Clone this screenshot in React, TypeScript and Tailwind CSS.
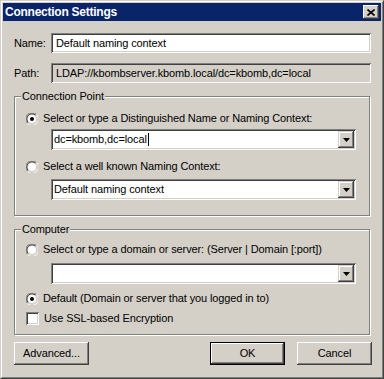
import React from 'react';

const sunken =
  'shadow-[inset_1px_1px_0_#808080,inset_-1px_-1px_0_#ffffff,inset_2px_2px_0_#404040,inset_-2px_-2px_0_#d4d0c8]';
const raised =
  'shadow-[inset_-1px_-1px_0_#404040,inset_1px_1px_0_#ffffff,inset_-2px_-2px_0_#808080,inset_2px_2px_0_#d4d0c8]';
const raisedCombo =
  'shadow-[inset_-1px_-1px_0_#404040,inset_1px_1px_0_#d4d0c8,inset_-2px_-2px_0_#808080,inset_2px_2px_0_#ffffff]';

function Radio({ checked }: { checked?: boolean }) {
  return (
    <svg width="12" height="12" viewBox="0 0 12 12" className="shrink-0">
      <path d="M1.5 10.5 A6 6 0 0 1 10.5 1.5" fill="none" stroke="#808080" strokeWidth="1" />
      <path d="M10.5 1.5 A6 6 0 0 1 1.5 10.5" fill="none" stroke="#ffffff" strokeWidth="1" />
      <path d="M2.3 9.7 A4.9 4.9 0 0 1 9.7 2.3" fill="none" stroke="#404040" strokeWidth="1" />
      <path d="M9.7 2.3 A4.9 4.9 0 0 1 2.3 9.7" fill="none" stroke="#d4d0c8" strokeWidth="1" />
      <circle cx="6" cy="6" r="4" fill="#ffffff" />
      {checked && <circle cx="6" cy="6" r="2" fill="#000000" />}
    </svg>
  );
}

function Combo({ value, caret }: { value?: string; caret?: boolean }) {
  return (
    <div className={`ml-[36px] w-[305px] h-[21px] bg-white ${sunken} flex items-center p-[2px]`}>
      <div className="flex-1 flex items-center pl-[1px] h-full">
        <span className="leading-[13px]">{value}</span>
        {caret && <span className="w-[1px] h-[13px] bg-black ml-[1px]" />}
      </div>
      <div className={`w-[16px] h-[17px] bg-[#d4d0c8] ${raisedCombo} flex items-center justify-center`}>
        <svg width="7" height="4" viewBox="0 0 7 4">
          <path d="M0 0H7L3.5 4Z" fill="#000" />
        </svg>
      </div>
    </div>
  );
}

function Button({ label, isDefault }: { label: string; isDefault?: boolean }) {
  return (
    <div
      className={`w-[75px] h-[23px] bg-[#d4d0c8] flex items-center justify-center ${
        isDefault
          ? 'shadow-[inset_0_0_0_1px_#000000,inset_-2px_-2px_0_#404040,inset_2px_2px_0_#ffffff,inset_-3px_-3px_0_#808080]'
          : raised
      }`}
    >
      {label}
    </div>
  );
}

function Group({ title, className, children }: { title: string; className: string; children: React.ReactNode }) {
  return (
    <div
      className={`w-[356px] border border-[#808080] shadow-[inset_1px_1px_0_#ffffff,1px_1px_0_#ffffff] flex flex-col ${className}`}
    >
      <span className="-mt-[7px] ml-[6px] px-[1px] bg-[#d4d0c8] w-fit leading-[13px]">{title}</span>
      {children}
    </div>
  );
}

export default function App() {
  return (
    <div className="w-[384px] h-[379px] bg-[#d4d0c8] text-[11px] tracking-[-0.12px] text-black font-['Liberation_Sans',Arial,sans-serif]">
      <div className="w-full h-full border border-t-[#d4d0c8] border-l-[#d4d0c8] border-r-[#404040] border-b-[#404040]">
        <div className="w-full h-full border border-t-white border-l-white border-r-[#808080] border-b-[#808080] p-[1px] flex flex-col">
          {/* title bar */}
          <div className="h-[18px] bg-[#0a246a] flex items-center justify-between pl-[2px] pr-[2px]">
            <span className="text-white font-bold text-[12px] leading-[14px] tracking-[-0.25px]">Connection Settings</span>
            <div className={`w-[16px] h-[14px] bg-[#d4d0c8] ${raised} flex items-center justify-center`}>
              <svg width="8" height="7" viewBox="0 0 8 7">
                <path d="M0.5 0.5L7.5 6.5M7.5 0.5L0.5 6.5" stroke="#000" strokeWidth="1.6" />
              </svg>
            </div>
          </div>

          <div className="flex flex-col pl-[11px] pr-[10px] pt-[12px]">
            <div className="flex items-center">
              <span className="w-[37px]">Name:</span>
              <div className={`flex-1 h-[20px] bg-white ${sunken} flex items-center pl-[5px]`}>
                Default naming context
              </div>
            </div>
            <div className="flex items-center mt-[10px]">
              <span className="w-[37px]">Path:</span>
              <div className={`flex-1 h-[20px] ${sunken} flex items-center pl-[5px]`}>
                LDAP://kbombserver.kbomb.local/dc=kbomb,dc=local
              </div>
            </div>

            <Group title="Connection Point" className="mt-[13px] h-[120px]">
              <div className="mt-[9px] h-[13px] flex items-center gap-[5px] pl-[11px]">
                <Radio checked />
                <span>Select or type a Distinguished Name or Naming Context:</span>
              </div>
              <div className="mt-[4px]">
                <Combo value="dc=kbomb,dc=local" caret />
              </div>
              <div className="mt-[10px] h-[13px] flex items-center gap-[5px] pl-[11px]">
                <Radio />
                <span>Select a well known Naming Context:</span>
              </div>
              <div className="mt-[6px]">
                <Combo value="Default naming context" />
              </div>
            </Group>

            <Group title="Computer" className="mt-[13px] h-[106px]">
              <div className="mt-[7px] h-[13px] flex items-center gap-[5px] pl-[11px]">
                <Radio />
                <span>Select or type a domain or server: (Server | Domain [:port])</span>
              </div>
              <div className="mt-[7px]">
                <Combo />
              </div>
              <div className="mt-[8px] h-[13px] flex items-center gap-[5px] pl-[11px]">
                <Radio checked />
                <span>Default (Domain or server that you logged in to)</span>
              </div>
              <div className="mt-[7px] h-[13px] flex items-center gap-[5px] pl-[11px]">
                <div className={`w-[13px] h-[13px] bg-white ${sunken} shrink-0`} />
                <span>Use SSL-based Encryption</span>
              </div>
            </Group>

            <div className="mt-[7px] flex items-center">
              <Button label="Advanced..." />
              <div className="flex-1" />
              <Button label="OK" isDefault />
              <div className="w-[12px]" />
              <div className="-mr-[1px]">
                <Button label="Cancel" />
              </div>
            </div>
          </div>
        </div>
      </div>
    </div>
  );
}
